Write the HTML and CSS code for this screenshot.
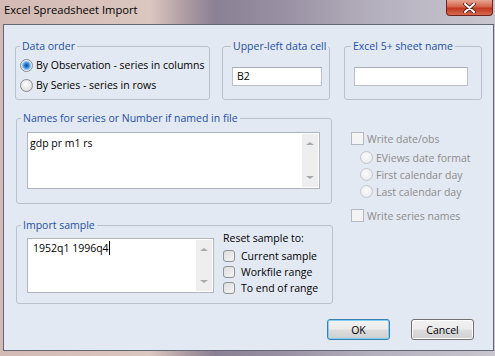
FILE: index.html
```html
<!DOCTYPE html>
<html lang="en">
<head>
    <meta charset="UTF-8">
    <title>Excel Spreadsheet Import</title>
    <link rel="stylesheet" href="styles.css">
</head>
<body>
    <div class="window">
        <div class="titlebar">
            <span class="title">Excel Spreadsheet Import</span>
            <button class="close-btn" aria-label="Close">
                <svg width="13" height="10" viewBox="0 0 13 10">
                    <path d="M2 1 L11 9 M11 1 L2 9" stroke="#4a1a12" stroke-width="3.6" stroke-linecap="round"/>
                    <path d="M2 1 L11 9 M11 1 L2 9" stroke="#fff" stroke-width="2" stroke-linecap="round"/>
                </svg>
            </button>
        </div>

        <div class="client">
            <!-- top row: data order / data cell / sheet name -->
            <div class="top-row">
                <div class="group order-group">
                    <div class="group-title">Data order</div>
                    <label class="option"><span class="radio checked"></span>By Observation - series in columns</label>
                    <label class="option"><span class="radio"></span>By Series - series in rows</label>
                </div>
                <div class="group cell-group">
                    <div class="group-title">Upper-left data cell</div>
                    <div class="field">B2</div>
                </div>
                <div class="group sheet-group">
                    <div class="group-title">Excel 5+ sheet name</div>
                    <div class="field"></div>
                </div>
            </div>

            <!-- series names + write options -->
            <div class="middle-row">
                <div class="group names-group">
                    <div class="group-title">Names for series or Number if named in file</div>
                    <div class="memo names-memo">
                        <div class="memo-text">gdp pr m1 rs</div>
                        <div class="scroll"><span class="arrow up"></span><span class="arrow down"></span></div>
                    </div>
                </div>
                <div class="write-options">
                    <label class="option disabled"><span class="check off"></span>Write date/obs</label>
                    <div class="date-options">
                        <label class="option disabled"><span class="radio off"></span>EViews date format</label>
                        <label class="option disabled"><span class="radio off"></span>First calendar day</label>
                        <label class="option disabled"><span class="radio off"></span>Last calendar day</label>
                    </div>
                    <label class="option disabled names-check"><span class="check off"></span>Write series names</label>
                </div>
            </div>

            <!-- import sample -->
            <div class="group sample-group">
                <div class="group-title">Import sample</div>
                <div class="sample-body">
                    <div class="memo sample-memo">
                        <div class="memo-text">1952q1 1996q4<span class="caret"></span></div>
                        <div class="scroll"><span class="arrow up"></span><span class="arrow down"></span></div>
                    </div>
                    <div class="reset">
                        <div class="reset-title">Reset sample to:</div>
                        <label class="option small"><span class="check"></span>Current sample</label>
                        <label class="option small"><span class="check"></span>Workfile range</label>
                        <label class="option small"><span class="check"></span>To end of range</label>
                    </div>
                </div>
            </div>

            <div class="buttons">
                <button class="btn default">OK</button>
                <button class="btn">Cancel</button>
            </div>
        </div>
    </div>
</body>
</html>
```

FILE: styles.css
```css
* {
    box-sizing: border-box;
}

body {
    margin: 0;
    font-family: "Open Sans", sans-serif;
    font-size: 10.5px;
    color: #000;
}

.window {
    width: 495px;
    height: 356px;
    padding: 0 1px 5px 3px;
    display: flex;
    flex-direction: column;
    background: linear-gradient(to right, #d3bab4 0, #dcc6c0 150px, #a8979f 190px, #8a8095 215px, #9890a2 280px, #b6b1bf 380px, #c9c6cf 495px);
}

.titlebar {
    height: 24px;
    flex: none;
    display: flex;
    justify-content: space-between;
    align-items: flex-start;
}

.title {
    font-size: 11.2px;
    line-height: 14px;
    padding: 3px 0 0 1px;
}

.close-btn {
    width: 47px;
    height: 16px;
    margin-right: 1px;
    padding: 0;
    border: 1px solid #70231a;
    border-top: none;
    border-radius: 0 0 4px 4px;
    background: linear-gradient(#e6a695 0, #d5644b 45%, #c2381f 55%, #d46a4f 100%);
    display: flex;
    align-items: center;
    justify-content: center;
}

.client {
    flex: 1;
    border: 1px solid #5f6774;
    background: #e3e9f2;
    padding: 21px 11px 0 11px;
}

/* group boxes */
.group {
    border: 1px solid #b8c2ce;
    border-radius: 3px;
}

.group-title {
    width: fit-content;
    margin: -8px 0 0 4px;
    padding: 0 2px;
    line-height: 14px;
    color: #1d4fa3;
    background: #e3e9f2;
}

.top-row {
    display: flex;
}

.order-group {
    width: 195px;
    height: 54px;
}

.cell-group {
    width: 108px;
    height: 54px;
    margin-left: 12px;
}

.cell-group .group-title {
    margin-left: 8px;
}

.sheet-group {
    width: 138px;
    height: 54px;
    margin-left: 14px;
}

.sheet-group .group-title {
    margin-left: 6px;
}

.option {
    display: flex;
    align-items: center;
    height: 20px;
    gap: 3px;
    white-space: nowrap;
}

.order-group .option {
    margin-left: 4px;
}

.order-group .option:first-of-type {
    margin-top: 2px;
}

.radio {
    width: 13px;
    height: 13px;
    border-radius: 50%;
    border: 1px solid #8a8c90;
    background: radial-gradient(circle at 45% 40%, #ffffff 0, #e6e6e6 55%, #cfd0d2 100%);
    flex: none;
}

.radio.checked {
    background: radial-gradient(circle at 50% 50%, #0f4d99 0, #2a78cc 2px, #6fb0ec 3.5px, #d8e9f8 5px, #f2f2f2 6px);
}

.radio.off {
    border-color: #c3c7cc;
    background: radial-gradient(circle at 45% 40%, #fbfbfb 0, #eceef0 60%, #e0e3e6 100%);
}

.check {
    width: 12px;
    height: 12px;
    border: 1px solid #8f9194;
    border-radius: 3px;
    background: linear-gradient(135deg, #dcdcdc 0, #f6f6f6 100%);
    flex: none;
}

.check.off {
    width: 13px;
    height: 13px;
    border-radius: 0;
    border-color: #b5b8bc;
    background: #f4f4f4;
}

.field {
    height: 19px;
    margin: 14px 0 0 9px;
    padding: 2px 4px;
    background: #fff;
    border: 1px solid #b9c0c9;
    border-top-color: #a9afb8;
    line-height: 13px;
}

.cell-group .field {
    width: 90px;
}

.sheet-group .field {
    width: 114px;
}

/* names row */
.middle-row {
    display: flex;
    height: 86px;
    margin-top: 18px;
}

.names-group {
    width: 316px;
    height: 86px;
    margin-left: 1px;
}

.memo {
    display: flex;
    background: #fff;
    border: 1px solid #aeb5be;
}

.memo-text {
    flex: 1;
    padding: 3px 2px;
    line-height: 15px;
}

.names-memo {
    width: 293px;
    height: 57px;
    margin: 7px 0 0 10px;
}

.scroll {
    width: 16px;
    margin: 1px;
    background: #eeeeee;
    display: flex;
    flex-direction: column;
    justify-content: space-between;
    align-items: center;
    padding: 8px 0 8px;
}

.arrow {
    width: 0;
    height: 0;
    border-left: 4px solid transparent;
    border-right: 4px solid transparent;
}

.arrow.up {
    border-bottom: 3px solid #a7a9ac;
}

.arrow.down {
    border-top: 3px solid #a7a9ac;
}

.write-options {
    margin: 14px 0 0 19px;
    display: flex;
    flex-direction: column;
}

.write-options .option {
    height: 13px;
    flex: none;
}

.disabled {
    color: #8c8c8c;
}

.date-options {
    margin: 6px 0 0 9px;
    display: flex;
    flex-direction: column;
    gap: 4px;
}

.names-check {
    margin-top: 11px;
}

/* import sample */
.sample-group {
    width: 317px;
    height: 79px;
    margin: 21px 0 0 1px;
}

.sample-body {
    display: flex;
}

.sample-memo {
    width: 187px;
    height: 55px;
    margin: 6px 0 0 10px;
}

.sample-memo .memo-text {
    padding: 2px 5px;
}

.caret {
    display: inline-block;
    width: 1px;
    height: 14px;
    background: #000;
    vertical-align: -3px;
}

.reset {
    margin: -1px 0 0 9px;
}

.reset-title {
    line-height: 14px;
    margin-bottom: 3px;
}

.option.small {
    height: 16px;
    gap: 6px;
}

/* buttons */
.buttons {
    display: flex;
    justify-content: flex-end;
    gap: 21px;
    margin-top: 15px;
    padding-right: 8px;
}

.btn {
    width: 63px;
    height: 21px;
    padding: 0;
    font-family: inherit;
    font-size: 10.5px;
    color: #000;
    border: 1px solid #707070;
    border-radius: 3px;
    background: linear-gradient(#f2f2f2 0, #ebebeb 48%, #dddddd 52%, #cfcfcf 100%);
    box-shadow: inset 0 0 0 1px #fcfcfc;
}

.btn.default {
    border-color: #3c7fb1;
    box-shadow: inset 0 0 0 1px #7fd2f6;
}
```
